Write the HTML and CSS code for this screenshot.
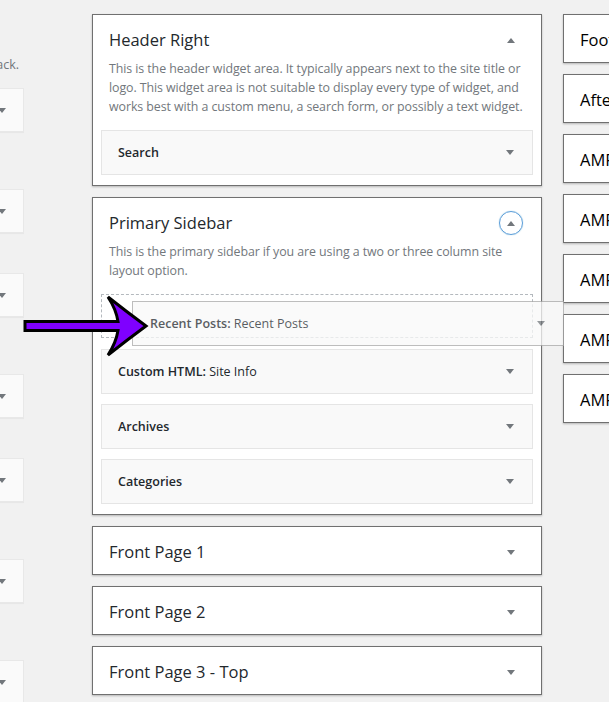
FILE: index.html
```html
<!DOCTYPE html>
<html lang="en">
<head>
    <meta charset="UTF-8">
    <meta name="viewport" content="width=device-width, initial-scale=1.0">
    <title>Widgets</title>
    <link rel="stylesheet" href="styles.css">
</head>
<body>
    <div class="screen">
        <!-- available widgets (mostly scrolled off to the left) -->
        <div class="col-available">
            <div class="available-inner">
                <p class="widget-desc tail">Displays a link back.</p>

                <div class="available-widget">
                    <div class="available-title"><h3>Archives</h3><span class="caret down"></span></div>
                    <p class="widget-desc">A monthly archive of your site&rsquo;s Posts, shown as a list.</p>
                </div>
                <div class="available-widget">
                    <div class="available-title"><h3>Audio</h3><span class="caret down"></span></div>
                    <p class="widget-desc">Displays an audio player.</p>
                </div>
                <div class="available-widget">
                    <div class="available-title"><h3>Calendar</h3><span class="caret down"></span></div>
                    <p class="widget-desc">A calendar of your site&rsquo;s Posts, by month and by day.</p>
                </div>
                <div class="available-widget">
                    <div class="available-title"><h3>Categories</h3><span class="caret down"></span></div>
                    <p class="widget-desc">A list or dropdown.</p>
                </div>
                <div class="available-widget">
                    <div class="available-title"><h3>Custom HTML</h3><span class="caret down"></span></div>
                    <p class="widget-desc">Arbitrary HTML code, scripts and embeds for the site.</p>
                </div>
                <div class="available-widget">
                    <div class="available-title"><h3>Gallery</h3><span class="caret down"></span></div>
                    <p class="widget-desc">Displays an image gallery from your media library.</p>
                </div>
                <div class="available-widget">
                    <div class="available-title"><h3>Image</h3><span class="caret down"></span></div>
                    <p class="widget-desc">Displays an image.</p>
                </div>
            </div>
        </div>

        <!-- widget areas -->
        <div class="col-sidebars">
            <div class="sidebar open">
                <div class="sidebar-head">
                    <h2>Header Right</h2>
                    <span class="caret up"></span>
                </div>
                <p class="sidebar-desc">This is the header widget area. It typically appears next to the site title or<br>
                    logo. This widget area is not suitable to display every type of widget, and<br>
                    works best with a custom menu, a search form, or possibly a text widget.</p>
                <div class="widget-list">
                    <div class="widget"><span class="widget-name"><b>Search</b></span><span class="caret down"></span></div>
                </div>
            </div>

            <div class="sidebar open">
                <div class="sidebar-head">
                    <h2>Primary Sidebar</h2>
                    <span class="toggle-btn"><span class="caret up"></span></span>
                </div>
                <p class="sidebar-desc">This is the primary sidebar if you are using a two or three column site<br>
                    layout option.</p>
                <div class="widget-list">
                    <div class="widget-placeholder"></div>
                    <div class="widget"><span class="widget-name"><b>Custom HTML:</b> Site Info</span><span class="caret down"></span></div>
                    <div class="widget"><span class="widget-name"><b>Archives</b></span><span class="caret down"></span></div>
                    <div class="widget"><span class="widget-name"><b>Categories</b></span><span class="caret down"></span></div>
                </div>
            </div>

            <div class="sidebar">
                <div class="sidebar-head"><h2>Front Page 1</h2><span class="caret down"></span></div>
            </div>
            <div class="sidebar">
                <div class="sidebar-head"><h2>Front Page 2</h2><span class="caret down"></span></div>
            </div>
            <div class="sidebar">
                <div class="sidebar-head"><h2>Front Page 3 - Top</h2><span class="caret down"></span></div>
            </div>
        </div>

        <div class="col-sidebars col-more">
            <div class="sidebar"><div class="sidebar-head"><h2>Footer 1</h2></div></div>
            <div class="sidebar"><div class="sidebar-head"><h2>After Entry</h2></div></div>
            <div class="sidebar"><div class="sidebar-head"><h2>AMP Header</h2></div></div>
            <div class="sidebar"><div class="sidebar-head"><h2>AMP Footer</h2></div></div>
            <div class="sidebar"><div class="sidebar-head"><h2>AMP Sidebar</h2></div></div>
            <div class="sidebar"><div class="sidebar-head"><h2>AMP Content</h2></div></div>
            <div class="sidebar"><div class="sidebar-head"><h2>AMP After</h2></div></div>
        </div>

        <!-- widget being dragged -->
        <div class="widget dragging">
            <span class="widget-name"><b>Recent Posts:</b> Recent Posts</span>
            <span class="caret down"></span>
        </div>

        <svg class="pointer-arrow" viewBox="20 290 135 72" width="135" height="72">
            <path d="M25,321.5 L118,321.5 Q116,309 108,297 Q127,312 146,326 Q127,340 108,355 Q116,343 118,330.5 L25,330.5 Z"
                  fill="#7f00ff" stroke="#000" stroke-width="3" stroke-linejoin="miter"/>
        </svg>
    </div>
</body>
</html>
```

FILE: styles.css
```css
* {
    margin: 0;
    padding: 0;
    box-sizing: border-box;
}

html, body {
    overflow: hidden;
}

body {
    font-family: 'Open Sans', 'Noto Sans', sans-serif;
    background: #f1f1f1;
    color: #23282d;
}

.screen {
    position: relative;
    display: flex;
    align-items: flex-start;
    height: 702px;
    overflow: hidden;
}

/* ---- available widgets ---- */

.col-available {
    flex: none;
    width: 24px;
    overflow: hidden;
}

.available-inner {
    width: 250px;
    margin-left: -226px;
}

.widget-desc {
    max-width: 190px;
    font-size: 12.5px;
    line-height: 17px;
    color: #72777c;
    margin: 11px 0 12px;
}

.widget-desc.tail {
    max-width: none;
    text-align: right;
    padding-right: 5px;
    margin: 56px 0 15px;
}

.available-title {
    display: flex;
    align-items: center;
    justify-content: space-between;
    height: 44px;
    padding: 0 17px 0 15px;
    background: #fafafa;
    border: 1px solid #e8e8e8;
    box-shadow: 0 1px 1px rgba(0, 0, 0, 0.04);
}

.available-title h3 {
    font-size: 12.5px;
    font-weight: 600;
}

/* ---- widget areas ---- */

.col-sidebars {
    flex: none;
    width: 450px;
    margin-left: 68px;
    padding-top: 14px;
}

.col-more {
    width: 200px;
    margin-left: 21px;
}

.sidebar {
    background: #fff;
    border: 1px solid #707070;
    box-shadow: 0 1px 2px rgba(0, 0, 0, 0.25);
    margin-bottom: 11px;
}

.sidebar-head {
    display: flex;
    align-items: center;
    justify-content: space-between;
    padding: 14px 26px 11px 16px;
}

.sidebar.open .sidebar-head {
    padding-bottom: 8px;
}

.sidebar-head h2 {
    font-size: 16.5px;
    line-height: 22px;
    font-weight: 400;
    white-space: nowrap;
}

.col-more h2 {
    color: #000;
}

.sidebar-desc {
    font-size: 12.4px;
    letter-spacing: -0.08px;
    line-height: 19px;
    color: #72777c;
    padding: 0 16px;
    white-space: nowrap;
}

.widget-list {
    display: flex;
    flex-direction: column;
    gap: 10px;
    padding: 14px 8px 10px;
}

.widget {
    display: flex;
    align-items: center;
    justify-content: space-between;
    height: 45px;
    padding: 0 18px 0 16px;
    background: #f9f9f9;
    border: 1px solid #e5e5e5;
    font-size: 12.5px;
}

.widget-name b {
    font-weight: 600;
}

.widget-placeholder {
    height: 44px;
    border: 1px dashed #b4b9be;
    margin-bottom: 1px;
}

.toggle-btn {
    display: flex;
    align-items: center;
    justify-content: center;
    width: 24px;
    height: 24px;
    margin: -2px -8px -2px 0;
    border: 1px solid #5b9dd9;
    border-radius: 50%;
    box-shadow: 0 0 1px rgba(30, 140, 190, 0.6);
}

.caret {
    width: 0;
    height: 0;
    border-left: 4px solid transparent;
    border-right: 4px solid transparent;
}

.caret.down {
    border-top: 5px solid #72777c;
}

.caret.up {
    border-bottom: 5px solid #72777c;
}

/* ---- drag state ---- */

.dragging {
    position: absolute;
    left: 132px;
    top: 301px;
    width: 432px;
    padding-left: 17px;
    border-color: #a8a8a8;
    opacity: 0.75;
}

.pointer-arrow {
    position: absolute;
    left: 20px;
    top: 290px;
}
```
